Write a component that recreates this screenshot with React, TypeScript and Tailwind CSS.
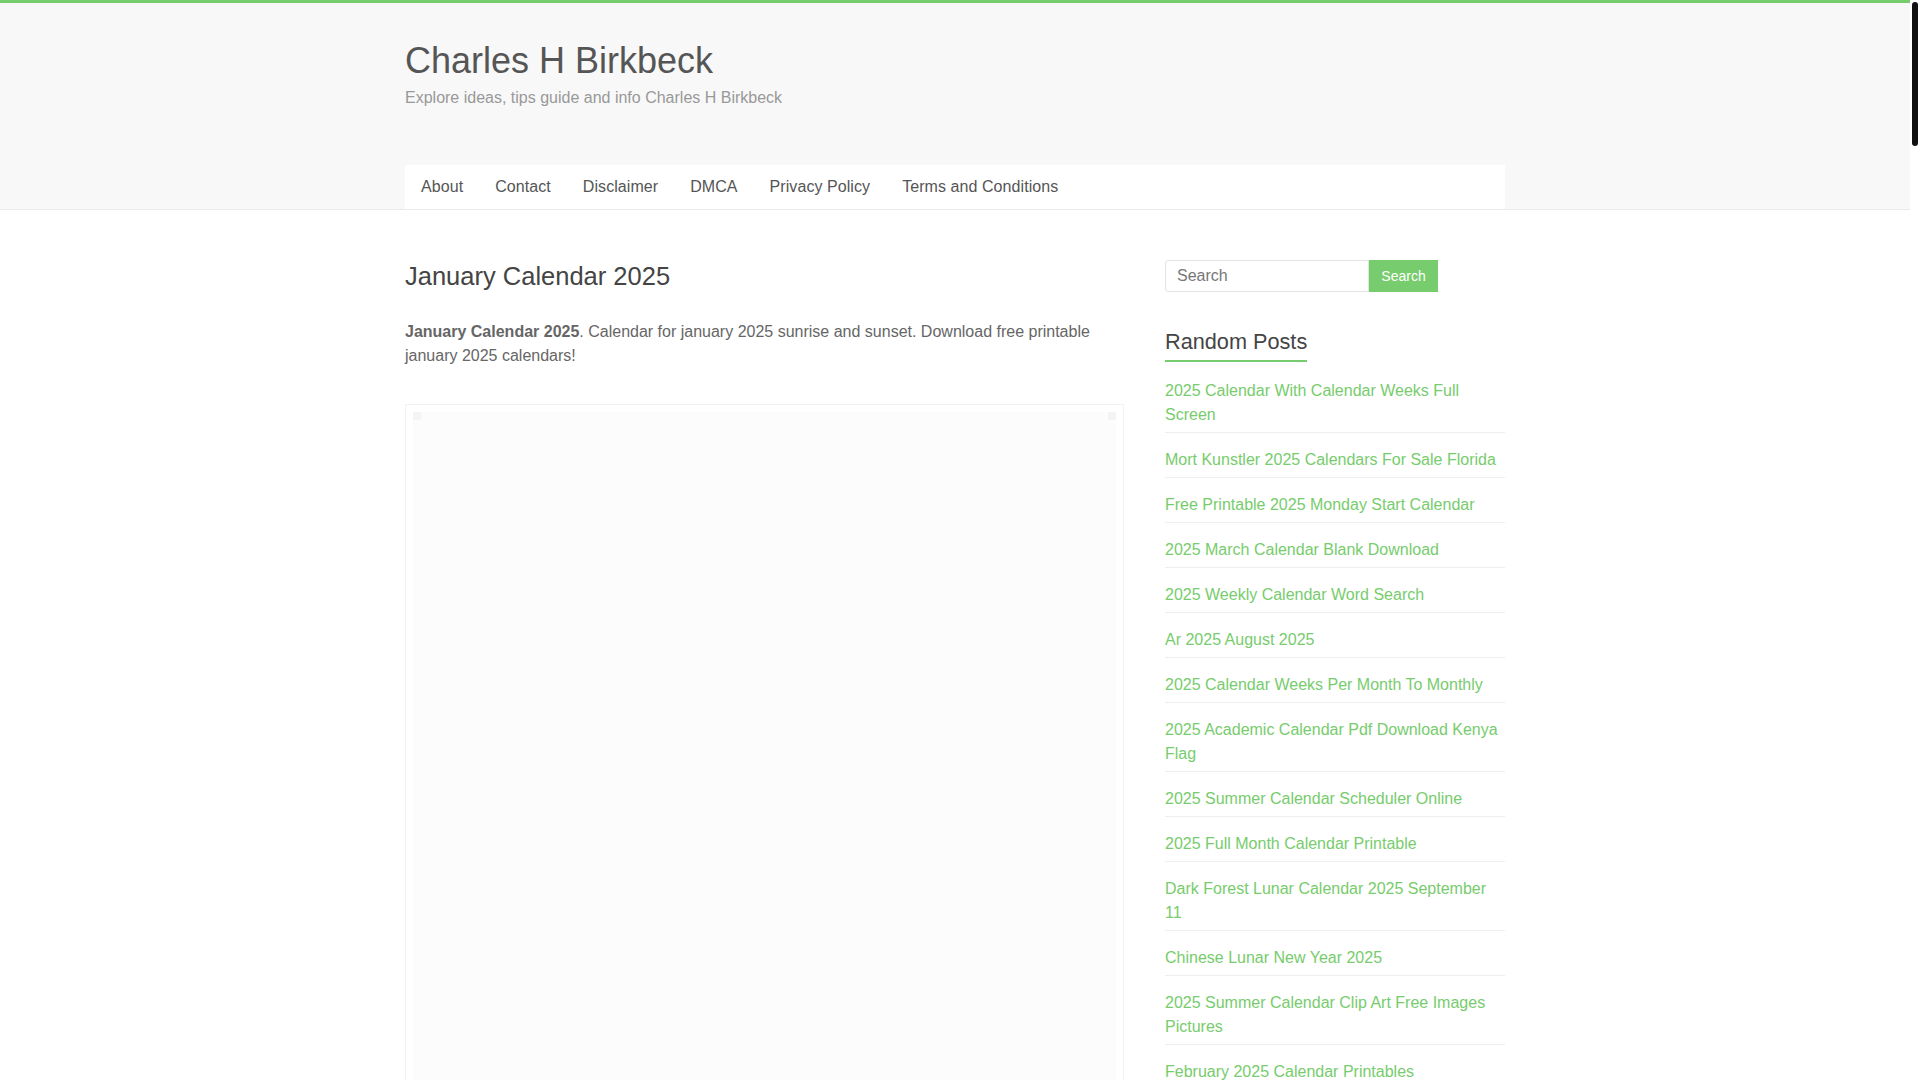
const navLinks = ["About", "Contact", "Disclaimer", "DMCA", "Privacy Policy", "Terms and Conditions"]

const randomPosts = [
  "2025 Calendar With Calendar Weeks Full Screen",
  "Mort Kunstler 2025 Calendars For Sale Florida",
  "Free Printable 2025 Monday Start Calendar",
  "2025 March Calendar Blank Download",
  "2025 Weekly Calendar Word Search",
  "Ar 2025 August 2025",
  "2025 Calendar Weeks Per Month To Monthly",
  "2025 Academic Calendar Pdf Download Kenya Flag",
  "2025 Summer Calendar Scheduler Online",
  "2025 Full Month Calendar Printable",
  "Dark Forest Lunar Calendar 2025 September 11",
  "Chinese Lunar New Year 2025",
  "2025 Summer Calendar Clip Art Free Images Pictures",
  "February 2025 Calendar Printables",
  "2025 Printable Calendar With Holidays Uk",
  "Lunar Calendar 2025 Hong Kong",
]

const Header = () => {
  return (
    <header className="bg-[#f8f8f8] border-t-[3px] border-b border-t-[#77cc6d] border-b-[#eaeaea]">
      <div className="w-[1100px] mx-auto pt-[36px]">
        {/* branding */}
        <h1 className="text-[36px] leading-[43px] text-[#555]">
          <a href="#">Charles H Birkbeck</a>
        </h1>
        <p className="mt-[4px] text-[16px] leading-6 text-[#999]">
          Explore ideas, tips guide and info Charles H Birkbeck
        </p>

        {/* menu */}
        <nav className="mt-[55px] h-[44px] bg-white flex items-center">
          {navLinks.map((item) => (
            <a key={item} href="#" className="px-4 text-[16px] tracking-[0.07px] leading-[44px] text-[#555]">
              {item}
            </a>
          ))}
        </nav>
      </div>
    </header>
  )
}

const Article = () => {
  return (
    <main className="w-[719px]">
      <h2 className="mt-px text-[25.5px] leading-[30px] text-[#444]">January Calendar 2025</h2>
      <p className="mt-[29px] text-[16px] leading-6 text-[#666]">
        <strong className="font-bold">January Calendar 2025</strong>. Calendar for january 2025 sunrise and
        sunset. Download free printable january 2025 calendars!
      </p>

      {/* featured image, still loading */}
      <div className="mt-[36px] border border-[#f2f2f2] p-[7px]">
        <div className="h-[1600px] bg-[#fcfcfc]">
          <div className="flex justify-between">
            <span className="w-[8px] h-[8px] bg-[#f4f4f4]" />
            <span className="w-[8px] h-[8px] bg-[#f4f4f4]" />
          </div>
        </div>
      </div>
    </main>
  )
}

const Sidebar = () => {
  return (
    <aside className="w-[340px]">
      <form className="flex" onSubmit={(e) => e.preventDefault()}>
        <input
          type="text"
          placeholder="Search"
          className="w-[204px] h-[32px] px-[11px] border border-[#e3e3e3] rounded-l-[3px] text-[16px] text-[#555] placeholder:text-[#777] outline-none"
        />
        <button type="submit" className="w-[69px] h-[32px] bg-[#77cc6d] text-white text-[14px]">
          Search
        </button>
      </form>

      <h3 className="mt-[38px] inline-block text-[21.7px] leading-6 text-[#444] pb-[6px] border-b-2 border-[#77cc6d]">
        Random Posts
      </h3>
      <ul className="mt-[2px]">
        {randomPosts.map((post) => (
          <li key={post} className="pt-[15px] pb-[5px] border-b border-[#eeeeee]">
            <a href="#" className="text-[16px] leading-6 text-[#77cc6d]">
              {post}
            </a>
          </li>
        ))}
      </ul>
    </aside>
  )
}

export default function App() {
  return (
    <div className="h-screen flex bg-white font-['Liberation_Sans',Arial,sans-serif]">
      <div className="flex-1 overflow-y-auto [scrollbar-width:none]">
        <div className="min-h-[8100px]">
          <Header />
          <div className="w-[1100px] mx-auto pt-[50px] flex justify-between">
            <Article />
            <Sidebar />
          </div>
        </div>
      </div>

      {/* page scrollbar */}
      <div className="w-[10px] shrink-0 bg-white pt-[2px] flex justify-center">
        <div className="w-[6px] h-[144px] rounded-full bg-[#111]" />
      </div>
    </div>
  )
}
